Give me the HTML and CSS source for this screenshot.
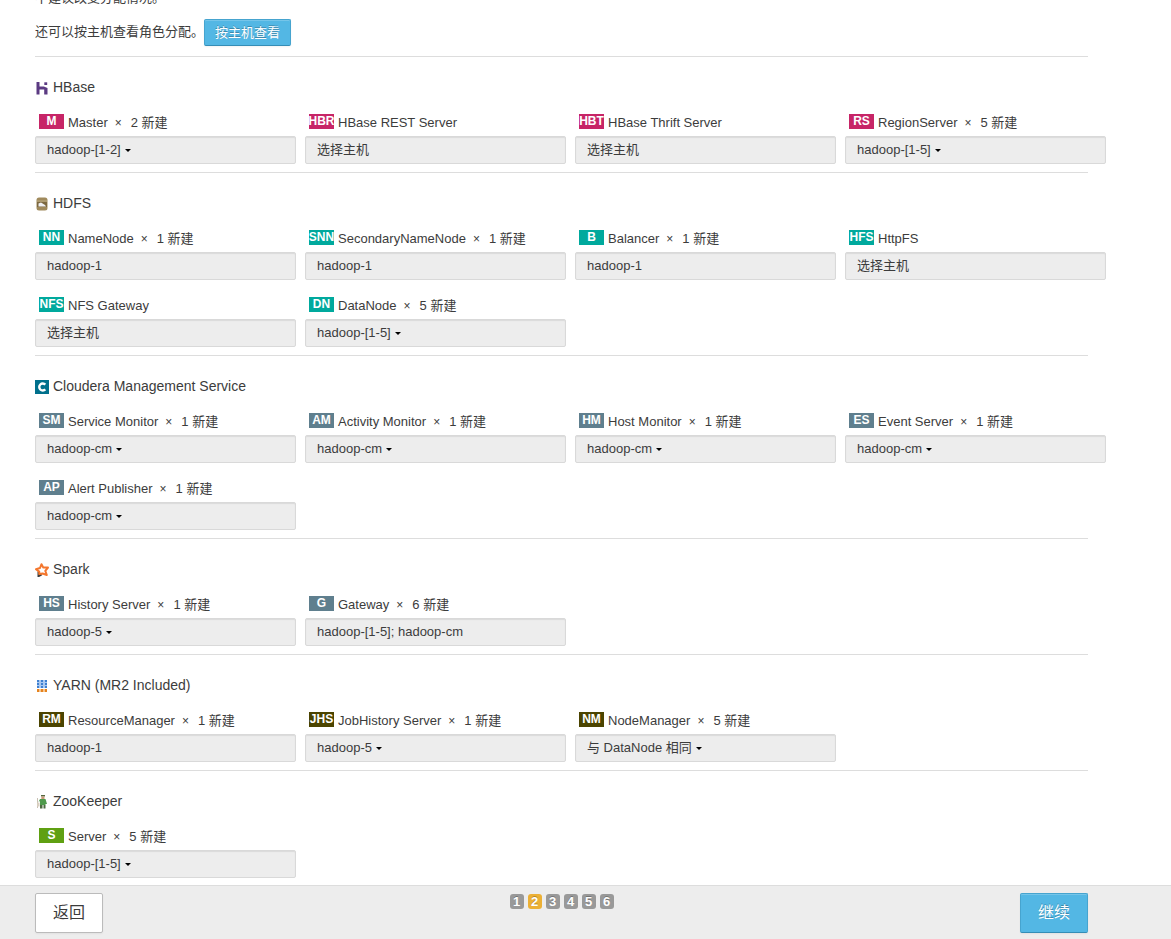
FILE: index.html
```html
<!DOCTYPE html>
<html lang="zh-CN">
<head>
<meta charset="utf-8">
<title>角色分配</title>
<link rel="stylesheet" href="styles.css">
</head>
<body>
<main class="content">
  <div class="intro">
    <p>不建议改变分配情况。</p>
    <p>还可以按主机查看角色分配。 <button type="button" class="btn btn-primary">按主机查看</button></p>
  </div>

  <section class="service hbase">
    <h2><svg class="icon" viewBox="0 0 14 14" aria-hidden="true"><path d="M1.500 1h3v4.500h4.300L12.500 7v6.500H9.200V8.500H4.500v5h-3z" fill="#5b3a82"/><path d="M9.300 1.300h2.900v2.700H9.300z" fill="#5b3a82"/></svg>HBase</h2>
    <div class="roles">
      <div class="role"><div class="label"><span class="badge">M</span><span>Master</span><i>×</i><span>2 新建</span></div><button type="button" class="hosts">hadoop-[1-2]<b class="caret"></b></button></div>
      <div class="role"><div class="label"><span class="badge">HBR</span><span>HBase REST Server</span></div><button type="button" class="hosts">选择主机</button></div>
      <div class="role"><div class="label"><span class="badge">HBT</span><span>HBase Thrift Server</span></div><button type="button" class="hosts">选择主机</button></div>
      <div class="role"><div class="label"><span class="badge">RS</span><span>RegionServer</span><i>×</i><span>5 新建</span></div><button type="button" class="hosts">hadoop-[1-5]<b class="caret"></b></button></div>
    </div>
  </section>

  <section class="service hdfs">
    <h2><svg class="icon" viewBox="0 0 14 14" aria-hidden="true"><rect x="1.500" y=".5" width="11" height="13" rx="2.500" fill="#a08a5c"/><path d="M2 3.500h10v1H2z" fill="#b9a880"/><path d="M2 5h10v5H2z" fill="#7c6840"/><path d="M3.500 9.500V6.500L6 5.500l4 2.500 1 1.500z" fill="#f0f0f2"/></svg>HDFS</h2>
    <div class="roles">
      <div class="role"><div class="label"><span class="badge">NN</span><span>NameNode</span><i>×</i><span>1 新建</span></div><button type="button" class="hosts">hadoop-1</button></div>
      <div class="role"><div class="label"><span class="badge">SNN</span><span>SecondaryNameNode</span><i>×</i><span>1 新建</span></div><button type="button" class="hosts">hadoop-1</button></div>
      <div class="role"><div class="label"><span class="badge">B</span><span>Balancer</span><i>×</i><span>1 新建</span></div><button type="button" class="hosts">hadoop-1</button></div>
      <div class="role"><div class="label"><span class="badge">HFS</span><span>HttpFS</span></div><button type="button" class="hosts">选择主机</button></div>
      <div class="role"><div class="label"><span class="badge">NFS</span><span>NFS Gateway</span></div><button type="button" class="hosts">选择主机</button></div>
      <div class="role"><div class="label"><span class="badge">DN</span><span>DataNode</span><i>×</i><span>5 新建</span></div><button type="button" class="hosts">hadoop-[1-5]<b class="caret"></b></button></div>
    </div>
  </section>

  <section class="service mgmt">
    <h2><svg class="icon" viewBox="0 0 14 14" aria-hidden="true"><path d="M0 0h14v14H0z" fill="#00708c"/><path d="M10.300 4.600A3.500 3.500 0 1 0 10.300 9.400" fill="none" stroke="#fff" stroke-width="2.400"/></svg>Cloudera Management Service</h2>
    <div class="roles">
      <div class="role"><div class="label"><span class="badge">SM</span><span>Service Monitor</span><i>×</i><span>1 新建</span></div><button type="button" class="hosts">hadoop-cm<b class="caret"></b></button></div>
      <div class="role"><div class="label"><span class="badge">AM</span><span>Activity Monitor</span><i>×</i><span>1 新建</span></div><button type="button" class="hosts">hadoop-cm<b class="caret"></b></button></div>
      <div class="role"><div class="label"><span class="badge">HM</span><span>Host Monitor</span><i>×</i><span>1 新建</span></div><button type="button" class="hosts">hadoop-cm<b class="caret"></b></button></div>
      <div class="role"><div class="label"><span class="badge">ES</span><span>Event Server</span><i>×</i><span>1 新建</span></div><button type="button" class="hosts">hadoop-cm<b class="caret"></b></button></div>
      <div class="role"><div class="label"><span class="badge">AP</span><span>Alert Publisher</span><i>×</i><span>1 新建</span></div><button type="button" class="hosts">hadoop-cm<b class="caret"></b></button></div>
    </div>
  </section>

  <section class="service spark">
    <h2><svg class="icon" viewBox="0 0 14 14" aria-hidden="true"><path d="M3.500 8.500v4.700l3.200-1.800" fill="none" stroke="#3c3c3c" stroke-width="2"/><path d="M6.500 1.200L8.300 4.600 13 4.500 10.300 7.800 11.800 12 7.600 10.500 4.300 11 4.200 8.600 1 6.200 5 5z" fill="none" stroke="#f4772e" stroke-width="2" stroke-linejoin="round"/></svg>Spark</h2>
    <div class="roles">
      <div class="role"><div class="label"><span class="badge">HS</span><span>History Server</span><i>×</i><span>1 新建</span></div><button type="button" class="hosts">hadoop-5<b class="caret"></b></button></div>
      <div class="role"><div class="label"><span class="badge">G</span><span>Gateway</span><i>×</i><span>6 新建</span></div><button type="button" class="hosts">hadoop-[1-5]; hadoop-cm</button></div>
    </div>
  </section>

  <section class="service yarn">
    <h2><svg class="icon" viewBox="0 0 14 14" aria-hidden="true"><path d="M2 1h10v8H2z" fill="#a9c8f0"/><path d="M2 10h10v3H2z" fill="#f5c48e"/><path d="M2 1h2v2H2zm4 0h2v2H6zm4 0h2v2h-2zM2 4h2v2H2zm4 0h2v2H6zm4 0h2v2h-2zM2 7h2v2H2zm4 0h2v2H6zm4 0h2v2h-2z" fill="#3f80d0"/><path d="M2 10h2v3H2zm4 0h2v3H6zm4 0h2v3h-2z" fill="#e6831e"/></svg>YARN (MR2 Included)</h2>
    <div class="roles">
      <div class="role"><div class="label"><span class="badge">RM</span><span>ResourceManager</span><i>×</i><span>1 新建</span></div><button type="button" class="hosts">hadoop-1</button></div>
      <div class="role"><div class="label"><span class="badge">JHS</span><span>JobHistory Server</span><i>×</i><span>1 新建</span></div><button type="button" class="hosts">hadoop-5<b class="caret"></b></button></div>
      <div class="role"><div class="label"><span class="badge">NM</span><span>NodeManager</span><i>×</i><span>5 新建</span></div><button type="button" class="hosts">与 DataNode 相同<b class="caret"></b></button></div>
    </div>
  </section>

  <section class="service zookeeper">
    <h2><svg class="icon" viewBox="0 0 14 14" aria-hidden="true"><path d="M6 0h4v1.500H6z" fill="#55683f"/><path d="M6.300 1.500h3.200V4H6.300z" fill="#c99a78"/><path d="M5 4h5.500l1.500 5h-1.500v1H5V6L3.500 7z" fill="#4f9a4c"/><path d="M5 10h2.500v3.500H5zm3.500 0h2v3.500h-2z" fill="#4d6b40"/><path d="M2.500 3v10" stroke="#c8bfb2"/><path d="M2 7.500h2.500v4H2z" fill="#d8cfc0"/></svg>ZooKeeper</h2>
    <div class="roles">
      <div class="role"><div class="label"><span class="badge">S</span><span>Server</span><i>×</i><span>5 新建</span></div><button type="button" class="hosts">hadoop-[1-5]<b class="caret"></b></button></div>
    </div>
  </section>
</main>

<footer class="wizard-bar">
  <button type="button" class="btn btn-large">返回</button>
  <ol class="steps">
    <li>1</li><li class="current" aria-current="step">2</li><li>3</li><li>4</li><li>5</li><li>6</li>
  </ol>
  <button type="button" class="btn btn-large btn-primary">继续</button>
</footer>
</body>
</html>
```
FILE: styles.css
```css
* { box-sizing: border-box; }

body {
  margin: 0;
  height: 100vh;
  display: flex;
  flex-direction: column;
  background: #fff;
  color: #3c3c3c;
  font: 13px/20px "Liberation Sans", Arial, "Noto Sans CJK SC", sans-serif;
}

button { font-family: inherit; color: inherit; margin: 0; cursor: pointer; }

.content {
  flex: 1;
  min-height: 0;
  overflow: hidden;
  padding: 0 83px 0 35px;
}

.intro {
  margin-top: -12px;
  padding-bottom: 10px;
  border-bottom: 1px solid #ddd;
}
.intro p { margin: 0 0 11px; }
.intro p:last-child {
  display: flex;
  align-items: flex-start;
  height: 27px;
  margin: 0;
  line-height: 25px;
}

.btn {
  border: 1px solid #bbb;
  border-radius: 2px;
  background: #fff;
  padding: 0 10px;
  font-size: 13px;
  line-height: 25px;
  box-shadow: 0 1px 2px rgba(0, 0, 0, .05);
}
.btn-primary {
  background: #53b7e4;
  border-color: #46a4cf #46a4cf #358db6;
  color: #fff;
  text-shadow: 0 -1px 0 rgba(0, 0, 0, .25);
  box-shadow: inset 0 1px 0 rgba(255, 255, 255, .2), 0 1px 2px rgba(0, 0, 0, .05);
}
.btn-large { padding: 0 17px; font-size: 16px; line-height: 38px; }

.service { padding: 20px 0 8px; border-bottom: 1px solid #ddd; }
.service:last-child { border-bottom: 0; }
.service h2 {
  display: flex;
  align-items: center;
  gap: 4px;
  margin: 0 0 15px;
  font-size: 14px;
  font-weight: normal;
  line-height: 20px;
}
.icon { width: 14px; height: 14px; margin-top: 2px; }

.roles {
  display: grid;
  grid-template-columns: repeat(4, minmax(0, 1fr));
  gap: 15px 9px;
  margin-right: -18px;
}
.label {
  display: flex;
  align-items: center;
  height: 20px;
  margin-bottom: 4px;
  padding: 2px 0 0 4px;
}
.label i { margin: 0 9px 0 7px; font-size: 12px; font-style: normal; }
.badge {
  display: flex;
  justify-content: center;
  width: 25px;
  height: 15px;
  margin: 0 4px 3px 0;
  color: #fff;
  font-size: 12px;
  font-weight: bold;
  line-height: 15px;
}
.hbase .badge { background: #c72567; }
.hdfs .badge { background: #00a99d; }
.mgmt .badge, .spark .badge { background: #5f7f8e; }
.yarn .badge { background: #4b4400; }
.zookeeper .badge { background: #5fa012; }

.hosts {
  display: flex;
  align-items: center;
  width: 100%;
  height: 28px;
  padding: 0 11px;
  border: 1px solid #d9d9d9;
  border-radius: 2px;
  background: #ededed;
  box-shadow: inset 0 1px 1px rgba(0, 0, 0, .08);
  font-size: 13px;
  line-height: 20px;
}
.caret {
  margin-left: 4px;
  border: 3px solid transparent;
  border-top-color: #000;
  border-bottom: 0;
}

.wizard-bar {
  display: flex;
  justify-content: space-between;
  align-items: flex-start;
  padding: 7px 83px 6px 35px;
  border-top: 1px solid #ddd;
  background: #ededed;
}
.steps { display: flex; gap: 4px; margin: 1px 0 0; padding: 0; list-style: none; }
.steps li {
  width: 14px;
  height: 15px;
  border-radius: 3px;
  background: #999;
  color: #fff;
  font-size: 13px;
  font-weight: bold;
  line-height: 15px;
  text-align: center;
  text-shadow: 0 -1px 0 rgba(0, 0, 0, .25);
}
.steps .current { background: #ecb035; }
```
